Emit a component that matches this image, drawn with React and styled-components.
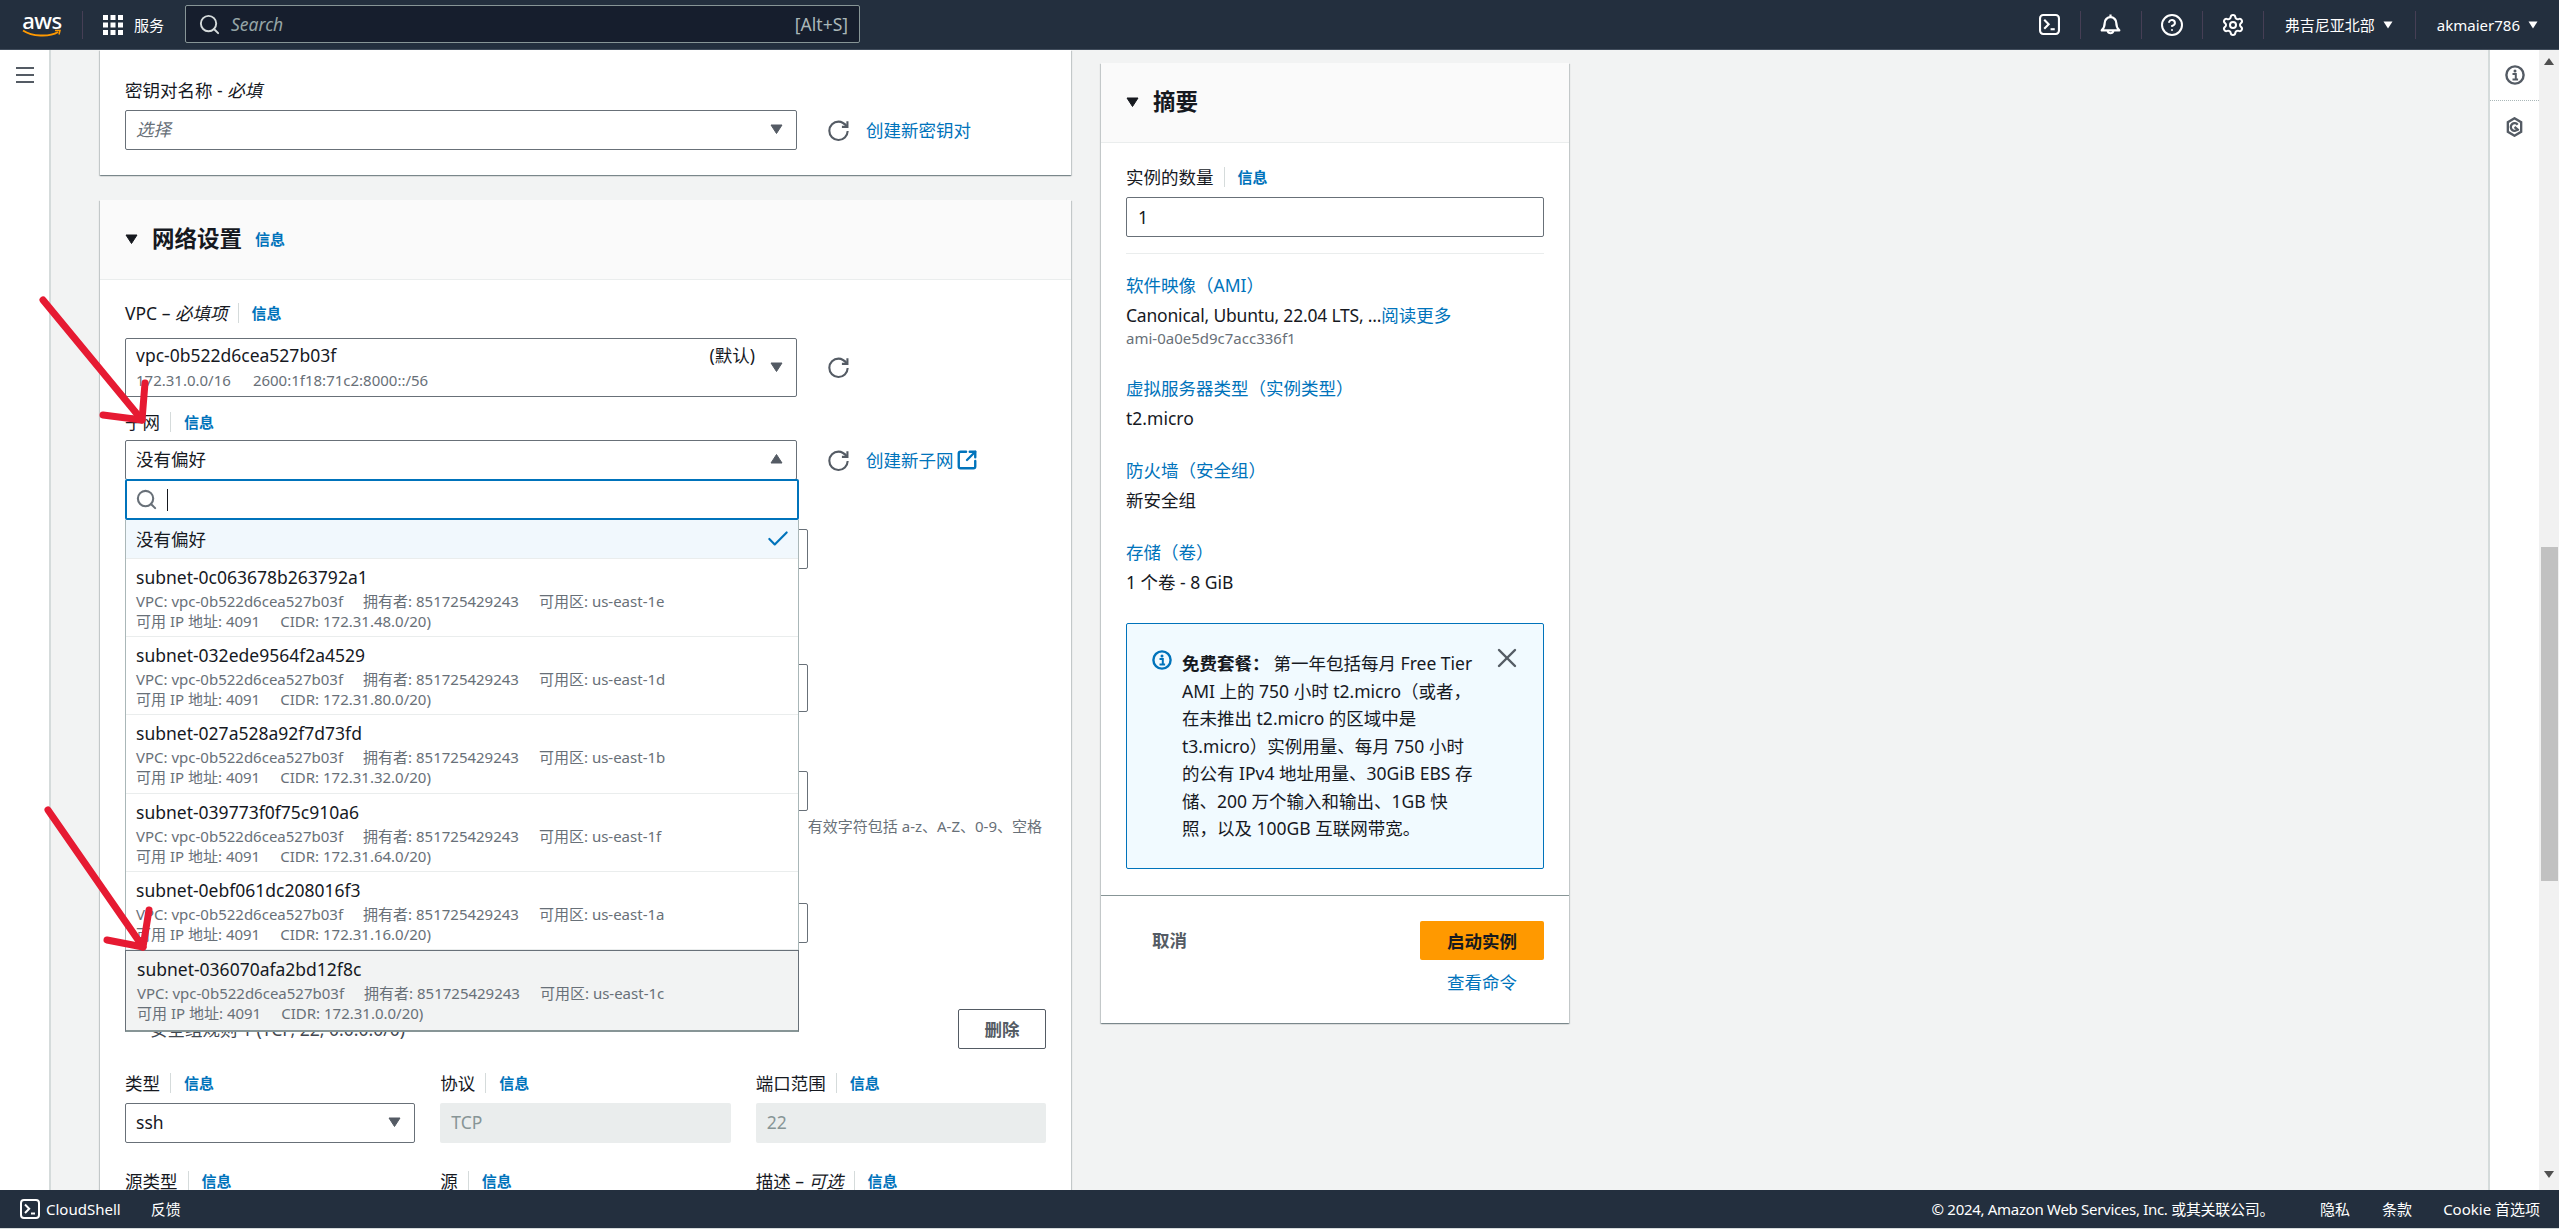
import styled, { createGlobalStyle } from "styled-components";
import { Check, CircleHelp, Search, Settings, SquareArrowOutUpRight, X } from "lucide-react";

const GlobalStyle = createGlobalStyle`
  * {
    box-sizing: border-box;
  }
  html, body {
    margin: 0;
    padding: 0;
    height: 100%;
    overflow: hidden;
  }
  body {
    font-family: "Noto Sans", "Noto Sans CJK SC", sans-serif;
    font-size: 17.5px;
    line-height: 22px;
    color: #16191f;
  }
`;

const Page = styled.div`
  position: relative;
  display: flex;
  flex-direction: column;
  height: 100vh;
  overflow: hidden;
  background: #f2f3f3;
`;

const TopNav = styled.header`
  display: flex;
  align-items: center;
  flex: none;
  gap: 20px;
  height: 50px;
  padding: 0 22px;
  background: #232f3e;
  border-bottom: 1px solid #414d5c;
  color: #fff;
  font-size: 15px;
`;

const AwsLogo = styled.div`
  display: flex;
  flex-direction: column;
  align-items: center;
  width: 40px;
  color: #fff;
  font-size: 22px;
  line-height: 17px;
  font-weight: 500;
  letter-spacing: -0.5px;
`;

const NavDivider = styled.span`
  flex: none;
  width: 1px;
  height: 28px;
  background: #463f55;
`;

const ServicesMenu = styled.div`
  display: flex;
  align-items: center;
  gap: 11px;
  margin-right: 1px;
`;

const SearchBox = styled.div`
  display: flex;
  align-items: center;
  width: 675px;
  height: 38px;
  margin-bottom: 1px;
  padding: 0 11px 0 14px;
  background: #161e2d;
  border: 1px solid #879596;
  border-radius: 2px;
  color: #aab7b8;
  font-size: 17.5px;
`;

const SearchGlyph = styled.span`
  display: flex;
  width: 18px;
  justify-content: center;
  svg {
    flex: none;
  }
`;

const SearchHint = styled.span`
  flex: 1;
  margin-left: 13px;
  color: #95a5a6;
  font-style: italic;
`;

const NavRight = styled.div`
  display: flex;
  align-items: center;
  gap: 20px;
  margin-left: auto;
  margin-right: -3px;
`;

const NavIcon = styled.span`
  display: flex;
  justify-content: center;
  width: 20px;
  svg {
    flex: none;
  }
`;

const NavText = styled.div`
  display: flex;
  align-items: center;
  gap: 8px;
  margin: 0 2px 0 1px;
`;

const Body = styled.div`
  display: flex;
  flex: 1;
  min-height: 0;
`;

const LeftRail = styled.aside`
  flex: none;
  width: 51px;
  padding: 17px 0 0 16px;
  background: #fff;
  border-right: 2px solid #d5dbdb;
`;

const Content = styled.main`
  display: flex;
  flex: 1;
  gap: 30px;
  min-width: 0;
  padding-left: 49px;
  overflow: hidden;
`;

const FormColumn = styled.div`
  flex: none;
  width: 971px;
`;

const Card = styled.section`
  background: #fff;
  box-shadow: 0 1px 1px 0 rgba(0, 28, 36, 0.3), 1px 1px 1px 0 rgba(0, 28, 36, 0.15),
    -1px 1px 1px 0 rgba(0, 28, 36, 0.15);
`;

const KeyCard = styled(Card)`
  height: 125px;
  padding: 29px 25px 0;
  margin-bottom: 25px;
`;

const CardHeader = styled.div`
  display: flex;
  align-items: center;
  gap: 14px;
  height: 80px;
  padding: 0 25px 2px;
  background: #fafafa;
  border-bottom: 1px solid #eaeded;
`;

const CardTitle = styled.h2`
  margin: 0;
  font-size: 22.5px;
  line-height: 28px;
  font-weight: 700;
`;

const CardBody = styled.div`
  padding: 22px 25px 0;
`;

const Label = styled.div`
  display: flex;
  align-items: center;
  height: 22px;
  margin-top: ${(p) => p.$top || 0}px;
  em {
    font-style: italic;
  }
`;

const InfoLink = styled.a`
  display: inline-block;
  margin-left: 10px;
  padding-left: 13px;
  border-left: 1px solid #d5dbdb;
  color: #0073bb;
  font-size: 15px;
  line-height: 20px;
  font-weight: 700;
`;

const HeaderInfo = styled.a`
  color: #0073bb;
  font-size: 15px;
  font-weight: 700;
  margin-left: -1px;
`;

const ControlRow = styled.div`
  display: flex;
  align-items: center;
  margin-top: ${(p) => p.$top}px;
`;

const SelectBox = styled.div`
  position: relative;
  display: flex;
  flex: none;
  align-items: center;
  justify-content: space-between;
  width: ${(p) => p.$width || 672}px;
  height: ${(p) => p.$height || 40}px;
  padding: 0 13px 2px 10px;
  background: #fff;
  border: 1px solid #687078;
  border-radius: 2px;
`;

const Placeholder = styled.span`
  color: #687078;
  font-style: italic;
`;

const VpcText = styled.div`
  flex: 1;
`;

const VpcTop = styled.div`
  display: flex;
  justify-content: space-between;
  margin-right: 15px;
`;

const VpcSub = styled.div`
  display: flex;
  gap: 22px;
  margin-top: 4px;
  color: #687078;
  font-size: 15px;
  line-height: 20px;
`;

const RefreshButton = styled.span`
  display: flex;
  flex: none;
  margin-left: 31px;
  margin-right: 17px;
`;

const TextLink = styled.a`
  display: flex;
  align-items: center;
  gap: 4px;
  color: #0073bb;
  svg {
    margin: -2px;
  }
`;

const Dropdown = styled.div`
  position: absolute;
  top: 38px;
  left: -1px;
  width: 674px;
  z-index: 5;
  background: #fff;
`;

const FilterBox = styled.div`
  display: flex;
  align-items: center;
  height: 41px;
  padding-left: 10px;
  border: 2.5px solid #0073bb;
  border-radius: 2px;
  color: #687078;
  svg {
    margin: -2px;
  }
`;

const TextCaret = styled.span`
  width: 1px;
  height: 22px;
  margin-left: 11px;
  background: #16191f;
`;

const OptionList = styled.ul`
  margin: 0;
  padding: 0;
  list-style: none;
  border-left: 1px solid #aab7b8;
  border-right: 1px solid #aab7b8;
`;

const PlainOption = styled.li`
  display: flex;
  align-items: center;
  justify-content: space-between;
  height: 39px;
  padding: 0 10px 0 10px;
  background: #f1f8fd;
  border-bottom: 1px solid #eaeded;
  color: #16191f;
  svg {
    margin: -3px;
  }
`;

const SubnetOption = styled.li`
  height: ${(p) => (p.$active ? 82 : 78.2)}px;
  margin: ${(p) => (p.$active ? "0 -1px" : "0")};
  padding: ${(p) => (p.$active ? "7px 11px 0" : "7px 10px 0")};
  background: ${(p) => (p.$active ? "#f2f3f3" : "#fff")};
  border: ${(p) => (p.$active ? "1px solid #687078" : "none")};
  border-bottom: ${(p) => (p.$active ? "2px solid #879596" : "1.5px solid #eaeded")};
`;

const OptionDetail = styled.div`
  display: flex;
  gap: 20px;
  color: #687078;
  font-size: 15px;
  line-height: 20px;
  margin-top: ${(p) => p.$top || 0}px;
`;

const BehindInput = styled.div`
  width: 683px;
  height: ${(p) => p.$height || 40}px;
  margin-top: ${(p) => p.$top}px;
  border: 1px solid #687078;
  border-radius: 2px;
  background: #fff;
`;

const HelperText = styled.div`
  margin-top: 5px;
  padding-right: 4px;
  color: #687078;
  font-size: 15px;
  line-height: 20px;
  text-align: right;
`;

const RuleHeader = styled.div`
  display: flex;
  align-items: center;
  justify-content: space-between;
  margin-top: 66px;
  padding-left: 25px;
  color: #414750;
  span {
    line-height: 10px;
  }
`;

const SecondaryButton = styled.button`
  width: 88px;
  height: 40px;
  padding: 0;
  background: #fff;
  border: 1px solid #545b64;
  border-radius: 2px;
  color: #545b64;
  font: inherit;
  font-weight: 700;
`;

const RuleGrid = styled.div`
  display: grid;
  grid-template-columns: repeat(3, 1fr);
  column-gap: 25px;
  margin-top: ${(p) => p.$top}px;
`;

const DisabledInput = styled.div`
  display: flex;
  align-items: center;
  height: 40px;
  margin-top: 9px;
  padding: 0 0 2px 11px;
  background: #eaeded;
  border-radius: 2px;
  color: #879596;
`;

const GridSelect = styled(SelectBox)`
  width: 100%;
  margin-top: 9px;
`;

const SummaryColumn = styled.div`
  flex: none;
  width: 468px;
  margin-top: 13px;
  align-self: flex-start;
`;

const SummaryBody = styled.div`
  padding: 23px 25px 26px;
`;

const SummaryInput = styled.div`
  display: flex;
  align-items: center;
  height: 40px;
  margin-top: 9px;
  padding-left: 11px;
  border: 1px solid #687078;
  border-radius: 2px;
`;

const SummaryDivider = styled.hr`
  height: 1px;
  margin: 16px 0 20px;
  border: 0;
  background: #eaeded;
`;

const SummaryItem = styled.div`
  margin-bottom: 30px;
`;

const SummaryLink = styled.a`
  display: block;
  color: #0073bb;
`;

const SummaryValue = styled.div`
  margin-top: 8px;
  a {
    color: #0073bb;
  }
`;

const TightText = styled.span`
  letter-spacing: -0.2px;
`;

const SummaryNote = styled.div`
  margin-top: 3px;
  color: #687078;
  font-size: 15px;
  line-height: 18px;
`;

const FreeTierBox = styled.div`
  display: flex;
  height: 246px;
  padding: 26px 28px 0 25px;
  background: #f1faff;
  border: 1px solid #0073bb;
  border-radius: 2px;
`;

const FreeTierIcon = styled.span`
  flex: none;
  width: 30px;
`;

const FreeTierText = styled.div`
  flex: 1;
  line-height: 27.5px;
  white-space: nowrap;
  b {
    margin-right: 4px;
    font-weight: 700;
  }
`;

const CloseIcon = styled.span`
  display: flex;
  flex: none;
  align-items: center;
  justify-content: center;
  width: 16px;
  height: 16px;
  color: #545b64;
  svg {
    flex: none;
  }
`;

const SummaryFooter = styled.div`
  display: flex;
  justify-content: space-between;
  height: 128px;
  padding: 25px 25px 0 51px;
  border-top: 1px solid #879596;
`;

const CancelLink = styled.a`
  margin-top: 8px;
  color: #545b64;
  font-weight: 700;
`;

const LaunchColumn = styled.div`
  display: flex;
  flex-direction: column;
  align-items: center;
  gap: 11px;
  width: 124px;
`;

const PrimaryButton = styled.button`
  width: 100%;
  height: 39px;
  padding: 0;
  background: #ff9900;
  border: 0;
  border-radius: 2px;
  color: #16191f;
  font: inherit;
  font-weight: 700;
`;

const RightRail = styled.aside`
  flex: none;
  width: 51px;
  background: #fff;
  border-left: 2px solid #d5dbdb;
  color: #545b64;
`;

const RailButton = styled.div`
  display: flex;
  justify-content: center;
  height: 51px;
  padding-top: ${(p) => p.$pad}px;
  border-bottom: ${(p) => (p.$line ? "1px dotted #aab7b8" : "none")};
`;

const ScrollTrack = styled.div`
  display: flex;
  flex: none;
  flex-direction: column;
  align-items: center;
  width: 20px;
  padding-top: 8px;
  background: #f1f1f1;
  color: #505050;
`;

const ScrollThumb = styled.div`
  width: 17px;
  height: 334px;
  margin-top: 482px;
  background: #c1c1c1;
`;

const ScrollDown = styled.div`
  margin-top: auto;
  margin-bottom: 8px;
`;

const BottomBar = styled.footer`
  display: flex;
  flex: none;
  align-items: center;
  height: 39px;
  padding: 0 19px 1px 20px;
  background: #232f3e;
  border-bottom: 1px solid #d5dbdb;
  color: #fff;
  font-size: 15px;
`;

const FooterLeft = styled.div`
  display: flex;
  align-items: center;
  gap: 6px;
`;

const FooterLink = styled.a`
  margin-left: ${(p) => p.$left}px;
  color: #fff;
`;

const Copyright = styled.span`
  margin-left: auto;
  letter-spacing: -0.3px;
`;

const Annotation = styled.svg`
  position: absolute;
  top: 0;
  left: 0;
  z-index: 10;
  pointer-events: none;
`;

const Caret = ({ up, color = "#545b64" }) => (
  <svg width="13" height="10" viewBox="0 0 13 10" style={{ flex: "none", transform: up ? "rotate(180deg)" : undefined }}>
    <path d="M1 1h11L6.5 9.5z" fill={color} stroke={color} strokeLinejoin="round" />
  </svg>
);

const SmallCaret = () => (
  <svg width="10" height="8" viewBox="0 0 10 8">
    <path d="M0.5 0.5h9L5 7.5z" fill="#fff" />
  </svg>
);

const Refresh = () => (
  <svg width="21" height="21" viewBox="0 0 16 16" fill="none" stroke="#545b64" strokeWidth="1.6">
    <path d="M14.8 1v4.2h-4.2" strokeLinejoin="miter" />
    <path d="M15 8.4A7 7 0 1 1 8 1.2c2.9 0 4.9 1.7 6.6 3.9" />
  </svg>
);

const InfoCircle = ({ color, size }) => (
  <svg width={size} height={size} viewBox="0 0 20 20" fill="none">
    <circle cx="10" cy="10" r="8.6" stroke={color} strokeWidth="2.4" />
    <circle cx="10" cy="6" r="1.5" fill={color} />
    <path d="M7.5 9h3.3v5.2M7.5 14.5h5.6" stroke={color} strokeWidth="2" />
  </svg>
);

const Hexagon = () => (
  <svg width="17" height="20" viewBox="0 0 20 24" fill="none" stroke="#545b64" strokeWidth="2.8">
    <path d="M10 1.5l8 4.7v11.6l-8 4.7-8-4.7V6.2z" />
    <path d="M13.8 9.2A4.6 4.6 0 1 0 13.8 14.8" />
    <path d="M10 12l5 4" />
  </svg>
);

const ShellIcon = ({ size }) => (
  <svg width={size} height={size} viewBox="0 0 20 20" fill="none" stroke="#fff" strokeWidth="2">
    <rect x="1" y="1" width="18" height="18" rx="3" />
    <path d="M5 5.5l4.2 4.2L5 14" />
    <path d="M11 14.5h4" />
  </svg>
);

const Bell = () => (
  <svg width="21" height="22" viewBox="0 0 21 22" fill="none" stroke="#fff" strokeWidth="2.2">
    <path d="M10.5 3.2a5.8 5.8 0 0 0-5.8 5.8c0 3.6-1 5.4-3 7.4h17.6c-2-2-3-3.8-3-7.4a5.8 5.8 0 0 0-5.8-5.8z" strokeLinejoin="round" />
    <path d="M10.5 0.5v2.6" />
    <path d="M7.6 17a3 3 0 0 0 5.8 0" />
  </svg>
);

const GridIcon = () => (
  <svg width="20" height="20" viewBox="0 0 20 20" fill="#fff">
    {[0, 7.5, 15].map((y) =>
      [0, 7.5, 15].map((x) => <rect key={`${x}-${y}`} x={x} y={y} width="5" height="5" />)
    )}
  </svg>
);

const Hamburger = () => (
  <svg width="18" height="16" viewBox="0 0 18 16" fill="#545b64" style={{ display: "block" }}>
    <rect y="0" width="18" height="2" />
    <rect y="7" width="18" height="2" />
    <rect y="14" width="18" height="2" />
  </svg>
);

const Arrow = ({ tail, tip, wingA, wingB }) => (
  <g fill="none" stroke="#e61a32" strokeWidth="7" strokeLinecap="round" strokeLinejoin="round">
    <path d={`M${tail} L${tip}`} />
    <path d={`M${wingA} L${tip} L${wingB}`} />
  </g>
);

const Scroller = ({ down }) => (
  <svg width="10" height="7" viewBox="0 0 10 7">
    <path d={down ? "M0 0h10L5 7z" : "M0 7h10L5 0z"} fill="#505050" />
  </svg>
);

const subnets = [
  { id: "subnet-0c063678b263792a1", zone: "us-east-1e", cidr: "172.31.48.0/20" },
  { id: "subnet-032ede9564f2a4529", zone: "us-east-1d", cidr: "172.31.80.0/20" },
  { id: "subnet-027a528a92f7d73fd", zone: "us-east-1b", cidr: "172.31.32.0/20" },
  { id: "subnet-039773f0f75c910a6", zone: "us-east-1f", cidr: "172.31.64.0/20" },
  { id: "subnet-0ebf061dc208016f3", zone: "us-east-1a", cidr: "172.31.16.0/20" },
  { id: "subnet-036070afa2bd12f8c", zone: "us-east-1c", cidr: "172.31.0.0/20", active: true },
];

const App = () => (
  <Page>
    <GlobalStyle />
    <TopNav>
      <AwsLogo>
        <span>aws</span>
        <svg width="40" height="9" viewBox="0 0 40 9" fill="none" stroke="#ff9900" strokeWidth="2">
          <path d="M1 1.5C10 7.5 27 8.5 36 3" />
          <path d="M33 1.5h5l-1 4" strokeWidth="1.5" />
        </svg>
      </AwsLogo>
      <NavDivider />
      <ServicesMenu>
        <GridIcon />
        <span>服务</span>
      </ServicesMenu>
      <SearchBox>
        <SearchGlyph>
          <Search size={23} strokeWidth={2} color="#d5dbdb" />
        </SearchGlyph>
        <SearchHint>Search</SearchHint>
        <span>[Alt+S]</span>
      </SearchBox>
      <NavRight>
        <NavIcon>
          <ShellIcon size={21} />
        </NavIcon>
        <NavDivider />
        <NavIcon>
          <Bell />
        </NavIcon>
        <NavDivider />
        <NavIcon>
          <CircleHelp size={24} strokeWidth={2} />
        </NavIcon>
        <NavDivider />
        <NavIcon>
          <Settings size={24} strokeWidth={2} />
        </NavIcon>
        <NavDivider />
        <NavText>
          <span>弗吉尼亚北部</span>
          <SmallCaret />
        </NavText>
        <NavDivider />
        <NavText>
          <span>akmaier786</span>
          <SmallCaret />
        </NavText>
      </NavRight>
    </TopNav>

    <Body>
      <LeftRail>
        <Hamburger />
      </LeftRail>
      <Content>
        <FormColumn>
          <KeyCard>
            <Label>
              密钥对名称 -&nbsp;<em>必填</em>
            </Label>
            <ControlRow $top={9}>
              <SelectBox>
                <Placeholder>选择</Placeholder>
                <Caret />
              </SelectBox>
              <RefreshButton>
                <Refresh />
              </RefreshButton>
              <TextLink>创建新密钥对</TextLink>
            </ControlRow>
          </KeyCard>

          <Card>
            <CardHeader>
              <Caret color="#16191f" />
              <CardTitle>网络设置</CardTitle>
              <HeaderInfo>信息</HeaderInfo>
            </CardHeader>
            <CardBody>
              <Label>
                VPC –&nbsp;<em>必填项</em>
                <InfoLink>信息</InfoLink>
              </Label>
              <ControlRow $top={14}>
                <SelectBox $height={59}>
                  <VpcText>
                    <VpcTop>
                      <span>vpc-0b522d6cea527b03f</span>
                      <span>(默认)</span>
                    </VpcTop>
                    <VpcSub>
                      <span>172.31.0.0/16</span>
                      <span>2600:1f18:71c2:8000::/56</span>
                    </VpcSub>
                  </VpcText>
                  <Caret />
                </SelectBox>
                <RefreshButton>
                  <Refresh />
                </RefreshButton>
              </ControlRow>

              <Label $top={14}>
                子网
                <InfoLink>信息</InfoLink>
              </Label>
              <ControlRow $top={7}>
                <SelectBox>
                  <span>没有偏好</span>
                  <Caret up />
                  <Dropdown>
                    <FilterBox>
                      <Search size={23} strokeWidth={2.2} />
                      <TextCaret />
                    </FilterBox>
                    <OptionList>
                      <PlainOption>
                        <span>没有偏好</span>
                        <Check size={26} color="#0073bb" strokeWidth={2} />
                      </PlainOption>
                      {subnets.map((s) => (
                        <SubnetOption key={s.id} $active={s.active}>
                          <div>{s.id}</div>
                          <OptionDetail $top={3}>
                            <span>VPC: vpc-0b522d6cea527b03f</span>
                            <span>拥有者: 851725429243</span>
                            <span>可用区: {s.zone}</span>
                          </OptionDetail>
                          <OptionDetail>
                            <span>可用 IP 地址: 4091</span>
                            <span>CIDR: {s.cidr})</span>
                          </OptionDetail>
                        </SubnetOption>
                      ))}
                    </OptionList>
                  </Dropdown>
                </SelectBox>
                <RefreshButton>
                  <Refresh />
                </RefreshButton>
                <TextLink>
                  创建新子网
                  <SquareArrowOutUpRight size={22} strokeWidth={2.6} />
                </TextLink>
              </ControlRow>

              <BehindInput $top={49} />
              <BehindInput $top={95} $height={48} />
              <BehindInput $top={59} />
              <HelperText>有效字符包括 a-z、A-Z、0-9、空格</HelperText>
              <BehindInput $top={67} />

              <RuleHeader>
                <span>安全组规则 1 (TCP, 22, 0.0.0.0/0)</span>
                <SecondaryButton>删除</SecondaryButton>
              </RuleHeader>

              <RuleGrid $top={23}>
                <div>
                  <Label>
                    类型
                    <InfoLink>信息</InfoLink>
                  </Label>
                  <GridSelect>
                    <span>ssh</span>
                    <Caret />
                  </GridSelect>
                </div>
                <div>
                  <Label>
                    协议
                    <InfoLink>信息</InfoLink>
                  </Label>
                  <DisabledInput>TCP</DisabledInput>
                </div>
                <div>
                  <Label>
                    端口范围
                    <InfoLink>信息</InfoLink>
                  </Label>
                  <DisabledInput>22</DisabledInput>
                </div>
              </RuleGrid>
              <RuleGrid $top={27}>
                <Label>
                  源类型
                  <InfoLink>信息</InfoLink>
                </Label>
                <Label>
                  源
                  <InfoLink>信息</InfoLink>
                </Label>
                <Label>
                  描述 –&nbsp;<em>可选</em>
                  <InfoLink>信息</InfoLink>
                </Label>
              </RuleGrid>
            </CardBody>
          </Card>
        </FormColumn>

        <SummaryColumn>
          <Card>
            <CardHeader>
              <Caret color="#16191f" />
              <CardTitle>摘要</CardTitle>
            </CardHeader>
            <SummaryBody>
              <Label>
                实例的数量
                <InfoLink>信息</InfoLink>
              </Label>
              <SummaryInput>1</SummaryInput>
              <SummaryDivider />
              <SummaryItem>
                <SummaryLink>软件映像（AMI）</SummaryLink>
                <SummaryValue>
                  <TightText>Canonical, Ubuntu, 22.04 LTS, ...</TightText>
                  <a>阅读更多</a>
                </SummaryValue>
                <SummaryNote>ami-0a0e5d9c7acc336f1</SummaryNote>
              </SummaryItem>
              <SummaryItem>
                <SummaryLink>虚拟服务器类型（实例类型）</SummaryLink>
                <SummaryValue>t2.micro</SummaryValue>
              </SummaryItem>
              <SummaryItem>
                <SummaryLink>防火墙（安全组）</SummaryLink>
                <SummaryValue>新安全组</SummaryValue>
              </SummaryItem>
              <SummaryItem>
                <SummaryLink>存储（卷）</SummaryLink>
                <SummaryValue>1 个卷 - 8 GiB</SummaryValue>
              </SummaryItem>
              <FreeTierBox>
                <FreeTierIcon>
                  <InfoCircle color="#0073bb" size={20} />
                </FreeTierIcon>
                <FreeTierText>
                  <b>免费套餐：</b>第一年包括每月 Free Tier
                  <br />
                  AMI 上的 750 小时 t2.micro（或者，
                  <br />
                  在未推出 t2.micro 的区域中是
                  <br />
                  t3.micro）实例用量、每月 750 小时
                  <br />
                  的公有 IPv4 地址用量、30GiB EBS 存
                  <br />
                  储、200 万个输入和输出、1GB 快
                  <br />
                  照，以及 100GB 互联网带宽。
                </FreeTierText>
                <CloseIcon>
                  <X size={32} strokeWidth={1.8} />
                </CloseIcon>
              </FreeTierBox>
            </SummaryBody>
            <SummaryFooter>
              <CancelLink>取消</CancelLink>
              <LaunchColumn>
                <PrimaryButton>启动实例</PrimaryButton>
                <TextLink>查看命令</TextLink>
              </LaunchColumn>
            </SummaryFooter>
          </Card>
        </SummaryColumn>
      </Content>
      <RightRail>
        <RailButton $line $pad={15}>
          <InfoCircle color="#545b64" size={20} />
        </RailButton>
        <RailButton $pad={16}>
          <Hexagon />
        </RailButton>
      </RightRail>
      <ScrollTrack>
        <Scroller />
        <ScrollThumb />
        <ScrollDown>
          <Scroller down />
        </ScrollDown>
      </ScrollTrack>
    </Body>

    <BottomBar>
      <FooterLeft>
        <ShellIcon size={20} />
        <span>CloudShell</span>
      </FooterLeft>
      <FooterLink $left={30}>反馈</FooterLink>
      <Copyright>© 2024, Amazon Web Services, Inc. 或其关联公司。</Copyright>
      <FooterLink $left={46}>隐私</FooterLink>
      <FooterLink $left={32}>条款</FooterLink>
      <FooterLink $left={31}>Cookie 首选项</FooterLink>
    </BottomBar>

    <Annotation width="200" height="1000" viewBox="0 0 200 1000">
      <Arrow tail="43,300" tip="142,420" wingA="145,383" wingB="103,415" />
      <Arrow tail="48,810" tip="143,947" wingA="149,910" wingB="107,940" />
    </Annotation>
  </Page>
);

export default App;
